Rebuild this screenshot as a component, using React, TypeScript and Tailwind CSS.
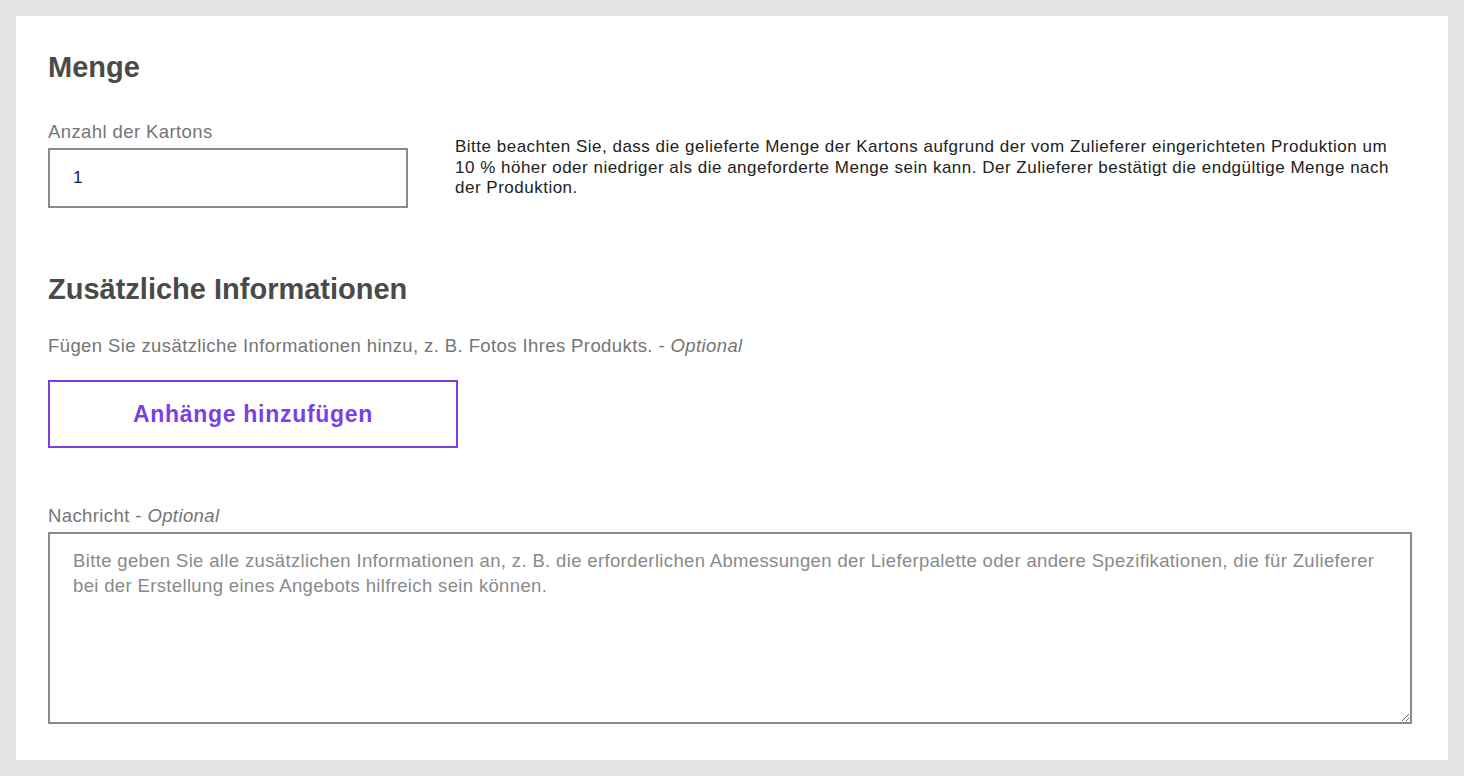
const note =
  'Bitte beachten Sie, dass die gelieferte Menge der Kartons aufgrund der vom Zulieferer eingerichteten Produktion um 10\u00a0% höher oder niedriger als die angeforderte Menge sein kann. Der Zulieferer bestätigt die endgültige Menge nach der Produktion.';

export default function App() {
  return (
    <div className="min-h-screen bg-[#e5e5e5] p-4 font-['Liberation_Sans',Arial,sans-serif]">
      <div className="flex h-[744px] flex-col bg-white pl-8 pr-9 pt-[31px]">
        <h2 className="text-[29px] font-bold leading-[40px] text-[#4a4a4a]">Menge</h2>

        <div className="mt-[33px] flex items-center gap-[47px]">
          <div className="flex w-[360px] shrink-0 flex-col">
            <label className="text-[18.5px] leading-[24px] tracking-[0.4px] text-[#757575]">Anzahl der Kartons</label>
            <input
              className="mt-[4px] h-[60px] w-[360px] border-2 border-[#8a8a8a] px-[23px] text-[17px] text-[#14145a] outline-none"
              defaultValue="1"
              type="text"
            />
          </div>
          <p className="mt-[8px] w-[950px] text-[17px] leading-[20.5px] tracking-[0.5px] text-[#222]">{note}</p>
        </div>

        <h2 className="mt-[61px] text-[29px] font-bold leading-[40px] text-[#4a4a4a]">Zusätzliche Informationen</h2>
        <p className="mt-[25px] text-[18.5px] leading-[24px] tracking-[0.4px] text-[#757575]">
          Fügen Sie zusätzliche Informationen hinzu, z. B. Fotos Ihres Produkts. - <i>Optional</i>
        </p>
        <button
          className="mt-[22px] h-[68px] w-[410px] border-2 border-[#7b3fe4] text-[23px] font-bold tracking-[0.7px] text-[#7b3fe4]"
          type="button"
        >
          Anhänge hinzufügen
        </button>

        <label className="mt-[56px] text-[18.5px] leading-[24px] tracking-[0.4px] text-[#757575]">
          Nachricht - <i>Optional</i>
        </label>
        <textarea
          className="mt-[4px] h-[192px] w-full border-2 border-[#8a8a8a] px-[23px] py-[14px] text-[18.5px] leading-[25px] tracking-[0.35px] text-[#333] outline-none placeholder:text-[#8a8a8a]"
          placeholder="Bitte geben Sie alle zusätzlichen Informationen an, z. B. die erforderlichen Abmessungen der Lieferpalette oder andere Spezifikationen, die für Zulieferer bei der Erstellung eines Angebots hilfreich sein können."
        />
      </div>
    </div>
  );
}
